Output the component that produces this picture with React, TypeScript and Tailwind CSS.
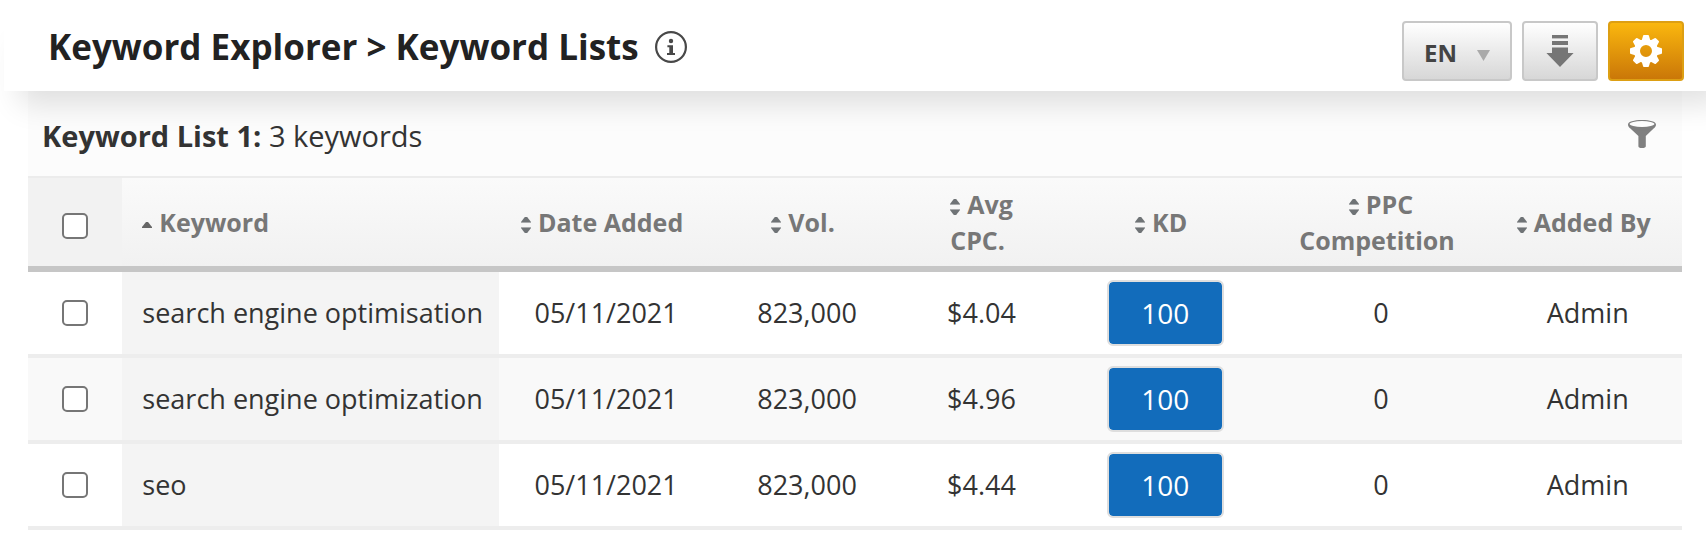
import { useState } from 'react';

const columns = [
  { lines: ['Date Added'], width: 'w-[12.9%]' },
  { lines: ['Vol.'], width: 'w-[11.4%]' },
  { lines: ['Avg', 'CPC.'], width: 'w-[9.7%]' },
  { lines: ['KD'], width: 'w-[12.5%]' },
  { lines: ['PPC', 'Competition'], width: 'w-[13.6%]' },
  { lines: ['Added By'], width: 'w-[11.4%]' }
];

const keywords = [
  { keyword: 'search engine optimisation', date: '05/11/2021', volume: '823,000', cpc: '$4.04', kd: 100, ppc: 0, addedBy: 'Admin' },
  { keyword: 'search engine optimization', date: '05/11/2021', volume: '823,000', cpc: '$4.96', kd: 100, ppc: 0, addedBy: 'Admin' },
  { keyword: 'seo', date: '05/11/2021', volume: '823,000', cpc: '$4.44', kd: 100, ppc: 0, addedBy: 'Admin' }
];

function InfoIcon() {
  return (
    <svg className="w-8 h-8" viewBox="0 0 32 32" aria-hidden="true">
      <circle cx="16" cy="16" r="14.9" fill="none" stroke="#484848" strokeWidth="2.2" />
      <circle cx="16" cy="10" r="2.2" fill="#484848" />
      <path d="M12.4 14.2H18V22H20V24H12V22H14.3V16.2H12.4Z" fill="#484848" />
    </svg>
  );
}

function DownloadIcon() {
  return (
    <svg className="w-7 h-8" viewBox="0 0 28 32" fill="#767676" aria-hidden="true">
      <path d="M6 0H22V3.4H6Z" />
      <path d="M6 6H22V10H6Z" />
      <path d="M6 12.4H22V18H27.6L14 32L0.4 18H6Z" />
    </svg>
  );
}

function GearIcon() {
  return (
    <svg className="w-8 h-8" viewBox="0 0 32 32" aria-hidden="true">
      <g fill="#fff">
        <path d="M13 1Q13 0 14 0H18Q19 0 19 1L20.5 6H11.5Z" />
        <path d="M13 1Q13 0 14 0H18Q19 0 19 1L20.5 6H11.5Z" transform="rotate(45 16 16)" />
        <path d="M13 1Q13 0 14 0H18Q19 0 19 1L20.5 6H11.5Z" transform="rotate(90 16 16)" />
        <path d="M13 1Q13 0 14 0H18Q19 0 19 1L20.5 6H11.5Z" transform="rotate(135 16 16)" />
        <path d="M13 1Q13 0 14 0H18Q19 0 19 1L20.5 6H11.5Z" transform="rotate(180 16 16)" />
        <path d="M13 1Q13 0 14 0H18Q19 0 19 1L20.5 6H11.5Z" transform="rotate(225 16 16)" />
        <path d="M13 1Q13 0 14 0H18Q19 0 19 1L20.5 6H11.5Z" transform="rotate(270 16 16)" />
        <path d="M13 1Q13 0 14 0H18Q19 0 19 1L20.5 6H11.5Z" transform="rotate(315 16 16)" />
      </g>
      <circle cx="16" cy="16" r="9" fill="none" stroke="#fff" strokeWidth="6" />
    </svg>
  );
}

function FilterIcon() {
  return (
    <svg className="w-7 h-7" viewBox="0 0 28 28" aria-hidden="true">
      <path d="M0 4.5C0 1.6 6 0 14 0S28 1.6 28 4.5C28 6.4 27 7.4 25.6 8.6L17.8 16V26.2C17.8 27.4 16.6 28 14 28S10.4 27.4 10.4 26.2V16L2.4 8.6C1 7.4 0 6.4 0 4.5Z" fill="#808080" />
      <ellipse cx="14" cy="4" rx="12.4" ry="2.9" fill="#fff" />
    </svg>
  );
}

function SortIcon() {
  return (
    <svg className="inline-block w-[10px] h-4 mr-[7px] align-middle" viewBox="0 0 10 16" aria-hidden="true">
      <path d="M3.8 0H6.2L10 5H0Z" fill="#6f7376" />
      <path d="M0 5H10V6H0ZM0 10H10V11H0Z" fill="#a9abad" />
      <path d="M0 11H10L6.2 16H3.8Z" fill="#6f7376" />
    </svg>
  );
}

function SortedIcon() {
  return (
    <svg className="inline-block w-[10px] h-4 mr-[7px] align-middle" viewBox="0 0 10 16" aria-hidden="true">
      <path d="M4 5H6L10 10V11H0V10Z" fill="#666" />
    </svg>
  );
}

function Checkbox({ label, checked, onChange }: { label: string; checked: boolean; onChange: () => void }) {
  return (
    <input
      type="checkbox"
      aria-label={label}
      checked={checked}
      onChange={onChange}
      className="block mx-auto w-[26px] h-[26px] appearance-none rounded-[5px] border-2 border-[#767676] bg-white checked:bg-[#126cbb]"
    />
  );
}

export default function App() {
  const [selected, setSelected] = useState<string[]>([]);
  const allSelected = selected.length === keywords.length;

  const toggle = (keyword: string) =>
    setSelected(selected.includes(keyword) ? selected.filter((k) => k !== keyword) : [...selected, keyword]);

  return (
    <div className="overflow-hidden bg-white pb-4 font-['Open_Sans',sans-serif] text-[#333]">
      <header className="relative z-10 ml-1 -mr-8 flex items-center justify-between bg-white pt-[21px] pr-[54px] pb-[10px] pl-11 shadow-[0_28px_30px_-15px_rgba(0,0,0,0.12)]">
        <div className="flex items-center gap-4 pb-2">
          <h1 className="text-[35px] leading-[48px] font-bold text-[#222]">Keyword Explorer &gt; Keyword Lists</h1>
          <button type="button" aria-label="About keyword lists">
            <InfoIcon />
          </button>
        </div>
        <div className="flex gap-[10px]">
          <div className="relative">
            <select
              aria-label="Language"
              className="h-[60px] w-[110px] appearance-none rounded-sm border-2 border-[#c8c8c8] bg-linear-to-b from-white to-[#d7d7d7] pt-1 pl-5 text-2xl font-bold text-[#444]"
            >
              <option>EN</option>
            </select>
            <svg className="pointer-events-none absolute top-[29px] right-[22px] h-[11px] w-[13px]" viewBox="0 0 13 11" aria-hidden="true">
              <path d="M0 0H13L6.5 11Z" fill="#aaa" />
            </svg>
          </div>
          <button
            type="button"
            aria-label="Download"
            className="flex h-[60px] w-[76px] items-center justify-center rounded-sm border-2 border-[#c8c8c8] bg-linear-to-b from-white to-[#d7d7d7]"
          >
            <DownloadIcon />
          </button>
          <button
            type="button"
            aria-label="Settings"
            className="flex h-[60px] w-[76px] items-center justify-center rounded-sm border-2 border-[#dd9f13] bg-linear-to-b from-[#fab70e] to-[#ca7708]"
          >
            <GearIcon />
          </button>
        </div>
      </header>

      <main className="mr-6 ml-7">
        <div className="flex items-start justify-between border-b-2 border-[#ececec] bg-[#fcfcfc] pt-[25px] pr-[26px] pb-5 pl-[14px]">
          <p className="text-[29px] leading-10">
            <strong className="font-bold">Keyword List 1:</strong> 3 keywords
          </p>
          <button type="button" aria-label="Filter" className="mt-1">
            <FilterIcon />
          </button>
        </div>

        <table className="w-full table-fixed border-separate border-spacing-0 text-[27px] leading-9">
          <thead>
            <tr className="h-[94px] text-[25px] text-[#777] *:border-b-[6px] *:border-[#c6c6c6]">
              <th className="w-[94px] bg-[#f2f2f2] pt-2">
                <Checkbox
                  label="Select all keywords"
                  checked={allSelected}
                  onChange={() => setSelected(allSelected ? [] : keywords.map((k) => k.keyword))}
                />
              </th>
              <th className="w-[22.8%] bg-linear-to-b from-[#fafafa] to-[#f1f1f1] pl-5 text-left">
                <button type="button" className="font-bold">
                  <SortedIcon />
                  Keyword
                </button>
              </th>
              {columns.map((column) => (
                <th key={column.lines[0]} className={`bg-linear-to-b from-[#fafafa] to-[#f1f1f1] pr-2 ${column.width}`}>
                  <button type="button" className="font-bold whitespace-nowrap">
                    <span className={column.lines.length > 1 ? 'block pl-2' : 'block'}>
                      <SortIcon />
                      {column.lines[0]}
                    </span>
                    {column.lines[1] && <span className="block">{column.lines[1]}</span>}
                  </button>
                </th>
              ))}
            </tr>
          </thead>
          <tbody>
            {keywords.map((row) => (
              <tr key={row.keyword} className="h-[86px] text-center *:border-b-4 *:border-[#ededed] even:bg-[#f9f9f9]">
                <td>
                  <Checkbox
                    label={`Select ${row.keyword}`}
                    checked={selected.includes(row.keyword)}
                    onChange={() => toggle(row.keyword)}
                  />
                </td>
                <td className="bg-[#f4f4f4] pl-5 text-left whitespace-nowrap">{row.keyword}</td>
                <td>{row.date}</td>
                <td>{row.volume}</td>
                <td>{row.cpc}</td>
                <td>
                  <span className="mx-auto flex h-[66px] w-[117px] items-center justify-center rounded-md border-2 border-[#dedede] bg-[#126cbb] bg-clip-padding text-[28px] text-white">
                    {row.kd}
                  </span>
                </td>
                <td>{row.ppc}</td>
                <td>{row.addedBy}</td>
              </tr>
            ))}
          </tbody>
        </table>
      </main>
    </div>
  );
}
